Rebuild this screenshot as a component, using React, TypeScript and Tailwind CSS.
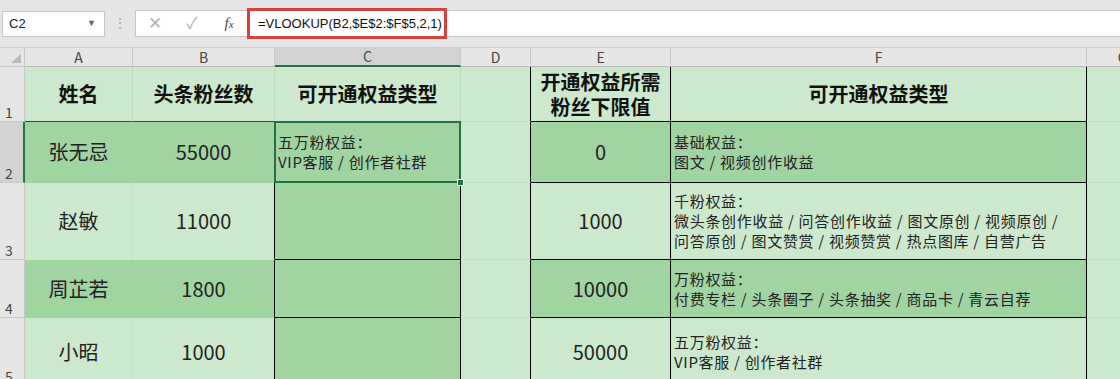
import React from 'react';

const LG = 'bg-[#cde9cd]';
const DG = 'bg-[#a0d4a1]';

const cjk = { fontFamily: '"Noto Sans CJK SC", "Noto Sans", sans-serif' };

interface CellProps {
  className?: string;
  children?: React.ReactNode;
}

// one grid cell, faint gridlines by default
const Cell: React.FC<CellProps> = ({ className = '', children }) => (
  <div className={`relative flex items-center border-r border-b ${className}`}>{children}</div>
);

const ColHead: React.FC<{ label: string; active?: boolean }> = ({ label, active }) => (
  <div
    className={`flex items-end justify-center pb-[1px] text-[14px] leading-[16px] border-r border-[#c9c9c9] ${
      active ? 'bg-[#d3d3d3] border-b-2 border-b-[#217346] text-[#2b5e3b]' : 'bg-[#e6e6e6] border-b border-b-[#b9b9b9] text-[#444]'
    }`}
  >
    {label}
  </div>
);

const RowHead: React.FC<{ n: number; active?: boolean }> = ({ n, active }) => (
  <div
    className={`flex items-end pl-[5px] pb-[1px] text-[14px] leading-[16px] text-[#444] border-b border-[#c9c9c9] ${
      active ? 'bg-[#d3d3d3] border-r-2 border-r-[#217346]' : 'bg-[#e6e6e6] border-r border-r-[#c9c9c9]'
    }`}
  >
    {n}
  </div>
);

const Big: React.FC<{ children: React.ReactNode; bold?: boolean }> = ({ children, bold }) => (
  <span className={`w-full text-center text-[20px] leading-[26px] ${bold ? 'font-bold text-[#111]' : 'text-[#222]'}`}>{children}</span>
);

const Small: React.FC<{ lines: string[] }> = ({ lines }) => (
  <div className="pl-[3px] text-[15px] leading-[20px] tracking-[0.7px] text-[#222]">
    {lines.map((l, i) => (
      <div key={i} className="whitespace-nowrap">{l}</div>
    ))}
  </div>
);

export default function App() {
  return (
    <div className="w-[1120px] h-[379px] overflow-hidden bg-[#e6e6e6]" style={{ fontFamily: '"Liberation Sans", "Noto Sans CJK SC", sans-serif' }}>
      {/* --- barra de fórmulas --- */}
      <div className="h-[48px] flex items-center border-b border-[#cfcfcf]">
        <div className="ml-[2px] w-[103px] h-[26px] bg-white border border-[#c6c6c6] flex items-center justify-between pl-[6px] pr-[8px]">
          <span className="text-[13px] text-[#222]">C2</span>
          <span className="text-[9px] text-[#666]">▼</span>
        </div>
        <div className="w-[30px] flex justify-center text-[14px] text-[#a8a8a8]">⋮</div>
        <div className="flex-1 h-[27px] bg-white border border-[#c6c6c6] border-r-0 flex items-center">
          <div className="w-[111px] flex items-center text-[#b4b4b4]">
            <span className="w-[36px] text-center text-[17px] leading-none ml-[1px]">✕</span>
            <span className="w-[38px] text-center text-[16px] leading-none">✓</span>
            <span className="w-[36px] text-center text-[15px] text-[#444] italic" style={{ fontFamily: '"Liberation Serif", serif' }}>
              f<span className="text-[11px]">x</span>
            </span>
          </div>
          <div className="h-[31px] w-[200px] border-[3px] border-[#d9413a] flex items-center pl-[8px] text-[13px] text-[#111] whitespace-nowrap">
            =VLOOKUP(B2,$E$2:$F$5,2,1)
          </div>
        </div>
      </div>

      {/* --- hoja --- */}
      <div
        className="grid grid-cols-[25px_108px_142px_186px_70px_140px_416px_72px] grid-rows-[19px_55px_61px_77px_58px_68px]"
        style={cjk}
      >
        {/* cabecera de columnas */}
        <div className="relative bg-[#e6e6e6] border-r border-b border-[#c9c9c9]">
          <svg className="absolute right-[3px] bottom-[3px]" width="10" height="9" viewBox="0 0 10 9">
            <polygon points="10,0 10,9 0,9" fill="#b8b8b8" />
          </svg>
        </div>
        <ColHead label="A" />
        <ColHead label="B" />
        <ColHead label="C" active />
        <ColHead label="D" />
        <ColHead label="E" />
        <ColHead label="F" />
        <ColHead label="G" />

        {/* fila 1 */}
        <RowHead n={1} />
        <Cell className={`${LG} border-r-[#bfdcbf] border-b-[#2f4a35]`}><Big bold>姓名</Big></Cell>
        <Cell className={`${LG} border-r-[#bfdcbf] border-b-[#2f4a35]`}><Big bold>头条粉丝数</Big></Cell>
        <Cell className={`${LG} border-r-[#bfdcbf] border-b-[#2f4a35]`}><Big bold>可开通权益类型</Big></Cell>
        <Cell className={`${LG} border-r-black border-b-[#c3dfc3]`} />
        <Cell className={`${LG} border-r-black border-b-black`}>
          <div className="w-full text-center text-[20px] leading-[25px] font-bold text-[#111]">
            <div>开通权益所需</div>
            <div>粉丝下限值</div>
          </div>
        </Cell>
        <Cell className={`${LG} border-r-black border-b-black`}><Big bold>可开通权益类型</Big></Cell>
        <Cell className={`${LG} border-r-[#c3dfc3] border-b-[#c3dfc3]`} />

        {/* fila 2 */}
        <RowHead n={2} active />
        <Cell className={`${DG} border-r-[#a0d4a1] border-b-[#a0d4a1]`}><Big>张无忌</Big></Cell>
        <Cell className={`${DG} border-r-[#2f4a35] border-b-[#a0d4a1]`}><Big>55000</Big></Cell>
        <Cell className={`${DG} border-r-black border-b-black`}>
          <Small lines={['五万粉权益：', 'VIP客服 / 创作者社群']} />
          <div className="absolute z-10 left-[-1px] top-[-1px] right-[-1px] bottom-[-1px] border-2 border-[#217346] pointer-events-none" />
          <div className="absolute z-20 right-[-4px] bottom-[-4px] w-[7px] h-[7px] bg-[#217346] border border-white" />
        </Cell>
        <Cell className={`${LG} border-r-black border-b-[#c3dfc3]`} />
        <Cell className={`${DG} border-r-black border-b-black`}><Big>0</Big></Cell>
        <Cell className={`${DG} border-r-black border-b-black`}><Small lines={['基础权益：', '图文 / 视频创作收益']} /></Cell>
        <Cell className={`${LG} border-r-[#c3dfc3] border-b-[#c3dfc3]`} />

        {/* fila 3 */}
        <RowHead n={3} />
        <Cell className={`${LG} border-r-[#c3dfc3] border-b-[#cde9cd]`}><Big>赵敏</Big></Cell>
        <Cell className={`${LG} border-r-black border-b-[#cde9cd]`}><Big>11000</Big></Cell>
        <Cell className={`${DG} border-r-black border-b-black`} />
        <Cell className={`${LG} border-r-black border-b-[#c3dfc3]`} />
        <Cell className={`${LG} border-r-black border-b-black`}><Big>1000</Big></Cell>
        <Cell className={`${LG} border-r-black border-b-black`}>
          <Small lines={['千粉权益：', '微头条创作收益 / 问答创作收益 / 图文原创 / 视频原创 /', '问答原创 / 图文赞赏 / 视频赞赏 / 热点图库 / 自营广告']} />
        </Cell>
        <Cell className={`${LG} border-r-[#c3dfc3] border-b-[#c3dfc3]`} />

        {/* fila 4 */}
        <RowHead n={4} />
        <Cell className={`${DG} border-r-[#a0d4a1] border-b-[#a0d4a1]`}><Big>周芷若</Big></Cell>
        <Cell className={`${DG} border-r-black border-b-[#a0d4a1]`}><Big>1800</Big></Cell>
        <Cell className={`${DG} border-r-black border-b-black`} />
        <Cell className={`${LG} border-r-black border-b-[#c3dfc3]`} />
        <Cell className={`${DG} border-r-black border-b-black`}><Big>10000</Big></Cell>
        <Cell className={`${DG} border-r-black border-b-black`}>
          <Small lines={['万粉权益：', '付费专栏 / 头条圈子 / 头条抽奖 / 商品卡 / 青云自荐']} />
        </Cell>
        <Cell className={`${LG} border-r-[#c3dfc3] border-b-[#c3dfc3]`} />

        {/* fila 5 */}
        <RowHead n={5} />
        <Cell className={`${LG} border-r-[#c3dfc3] border-b-[#c3dfc3]`}><Big>小昭</Big></Cell>
        <Cell className={`${LG} border-r-black border-b-[#c3dfc3]`}><Big>1000</Big></Cell>
        <Cell className={`${DG} border-r-black border-b-black`} />
        <Cell className={`${LG} border-r-black border-b-[#c3dfc3]`} />
        <Cell className={`${LG} border-r-black border-b-black`}><Big>50000</Big></Cell>
        <Cell className={`${LG} border-r-black border-b-black`}>
          <Small lines={['五万粉权益：', 'VIP客服 / 创作者社群']} />
        </Cell>
        <Cell className={`${LG} border-r-[#c3dfc3] border-b-[#c3dfc3]`} />
      </div>
    </div>
  );
}
